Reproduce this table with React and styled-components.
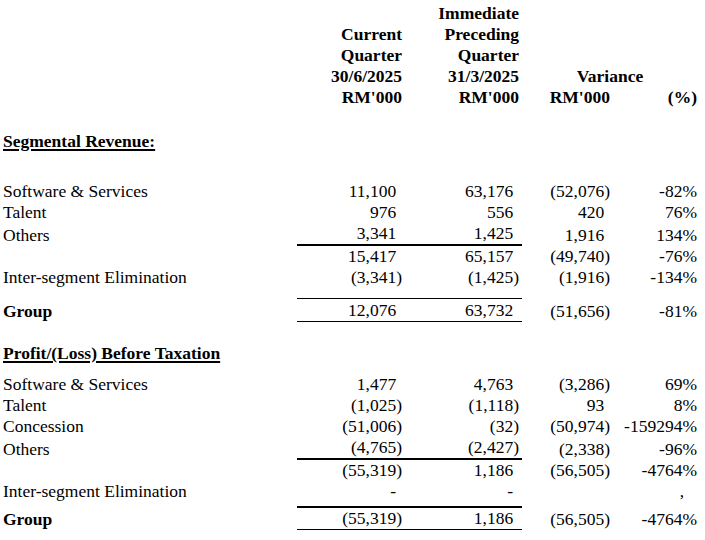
import styled, { createGlobalStyle } from 'styled-components';

const GlobalStyle = createGlobalStyle`
  body {
    margin: 0;
    background: #ffffff;
    color: #000000;
    font-family: "Liberation Serif", "Times New Roman", serif;
    font-size: 17.5px;
  }
`;

// label | current qtr | preceding qtr | variance | %
const COLS = '297px 113px 112px 90px 86px';
const PAD = [0, 8, 3, 2, 1];

const Sheet = styled.div`
  width: 705px;
  padding-top: 3px;
  line-height: 21px;
`;

const Grid = styled.div`
  display: grid;
  grid-template-columns: ${COLS};
  align-items: end;
  margin-top: ${(p) => p.$mt || 0}px;
  line-height: ${(p) => p.$lh || 21}px;
`;

const HeadCell = styled.div`
  font-weight: 700;
  text-align: right;
  padding-right: ${(p) => PAD[p.$col]}px;
`;

const VarianceHead = styled.div`
  grid-column: span 2;
  font-weight: 700;
  text-align: center;
`;

const SectionTitle = styled.div`
  margin-top: ${(p) => p.$mt}px;
  padding-left: 3px;
  font-weight: 700;
  text-decoration: underline;
  text-decoration-thickness: 2px;
  text-underline-offset: 2px;
`;

const Label = styled.div`
  padding-left: 3px;
  font-weight: ${(p) => (p.$bold ? 700 : 400)};
  white-space: nowrap;
`;

const Cell = styled.div`
  text-align: right;
  white-space: nowrap;
  padding-right: ${(p) => (p.$pr != null ? p.$pr : PAD[p.$col])}px;
  border-top: ${(p) => (p.$top ? `${p.$top}px solid #000` : 'none')};
  border-bottom: ${(p) => (p.$bottom ? `${p.$bottom}px solid #000` : 'none')};
`;

const Ghost = styled.span`
  visibility: hidden;
`;

const Num = ({ v }) => {
  if (!v) return null;
  if (v.startsWith('(')) return <>{v}</>;
  return (
    <>
      {v}
      <Ghost>)</Ghost>
    </>
  );
};

const DataRow = ({ row, rule, mt, lh }) => {
  const [label, a, b, c, d, bold, dPad] = row;
  return (
    <Grid $mt={mt} $lh={lh}>
      <Label $bold={bold}>{label}</Label>
      <Cell $col={1} $top={rule?.top} $bottom={rule?.bottom}>
        <Num v={a} />
      </Cell>
      <Cell $col={2} $top={rule?.top} $bottom={rule?.bottom}>
        <Num v={b} />
      </Cell>
      <Cell $col={3}>
        <Num v={c} />
      </Cell>
      <Cell $col={4} $pr={dPad}>
        {d}
      </Cell>
    </Grid>
  );
};

const revenue = [
  ['Software & Services', '11,100', '63,176', '(52,076)', '-82%'],
  ['Talent', '976', '556', '420', '76%'],
  ['Others', '3,341', '1,425', '1,916', '134%'],
  ['', '15,417', '65,157', '(49,740)', '-76%'],
  ['Inter-segment Elimination', '(3,341)', '(1,425)', '(1,916)', '-134%'],
];

const profit = [
  ['Software & Services', '1,477', '4,763', '(3,286)', '69%'],
  ['Talent', '(1,025)', '(1,118)', '93', '8%'],
  ['Concession', '(51,006)', '(32)', '(50,974)', '-159294%'],
  ['Others', '(4,765)', '(2,427)', '(2,338)', '-96%'],
  ['', '(55,319)', '1,186', '(56,505)', '-4764%'],
  ['Inter-segment Elimination', '-', '-', '', ',', false, 14],
];

export default function App() {
  return (
    <>
      <GlobalStyle />
      <Sheet>
        <Grid>
          <div />
          <HeadCell $col={1}>
            Current
            <br />
            Quarter
            <br />
            30/6/2025
          </HeadCell>
          <HeadCell $col={2}>
            Immediate
            <br />
            Preceding
            <br />
            Quarter
            <br />
            31/3/2025
          </HeadCell>
          <VarianceHead>Variance</VarianceHead>
        </Grid>
        <Grid>
          <div />
          <HeadCell $col={1}>RM'000</HeadCell>
          <HeadCell $col={2}>RM'000</HeadCell>
          <HeadCell $col={3}>RM'000</HeadCell>
          <HeadCell $col={4}>(%)</HeadCell>
        </Grid>

        <SectionTitle $mt={23}>Segmental Revenue:</SectionTitle>
        {revenue.map((r, i) => (
          <DataRow
            key={i}
            row={r}
            mt={i === 0 ? 29 : 0}
            rule={i === 2 ? { bottom: 2 } : null}
          />
        ))}
        <DataRow
          row={['Group', '12,076', '63,732', '(51,656)', '-81%', true]}
          rule={{ top: 1, bottom: 1 }}
          mt={10}
          lh={22}
        />

        <SectionTitle $mt={21}>Profit/(Loss) Before Taxation</SectionTitle>
        {profit.map((r, i) => (
          <DataRow
            key={i}
            row={r}
            mt={i === 0 ? 10 : 0}
            rule={i === 3 ? { bottom: 2 } : null}
          />
        ))}
        <DataRow
          row={['Group', '(55,319)', '1,186', '(56,505)', '-4764%', true]}
          rule={{ top: 2, bottom: 1 }}
          mt={4}
        />
      </Sheet>
    </>
  );
}
